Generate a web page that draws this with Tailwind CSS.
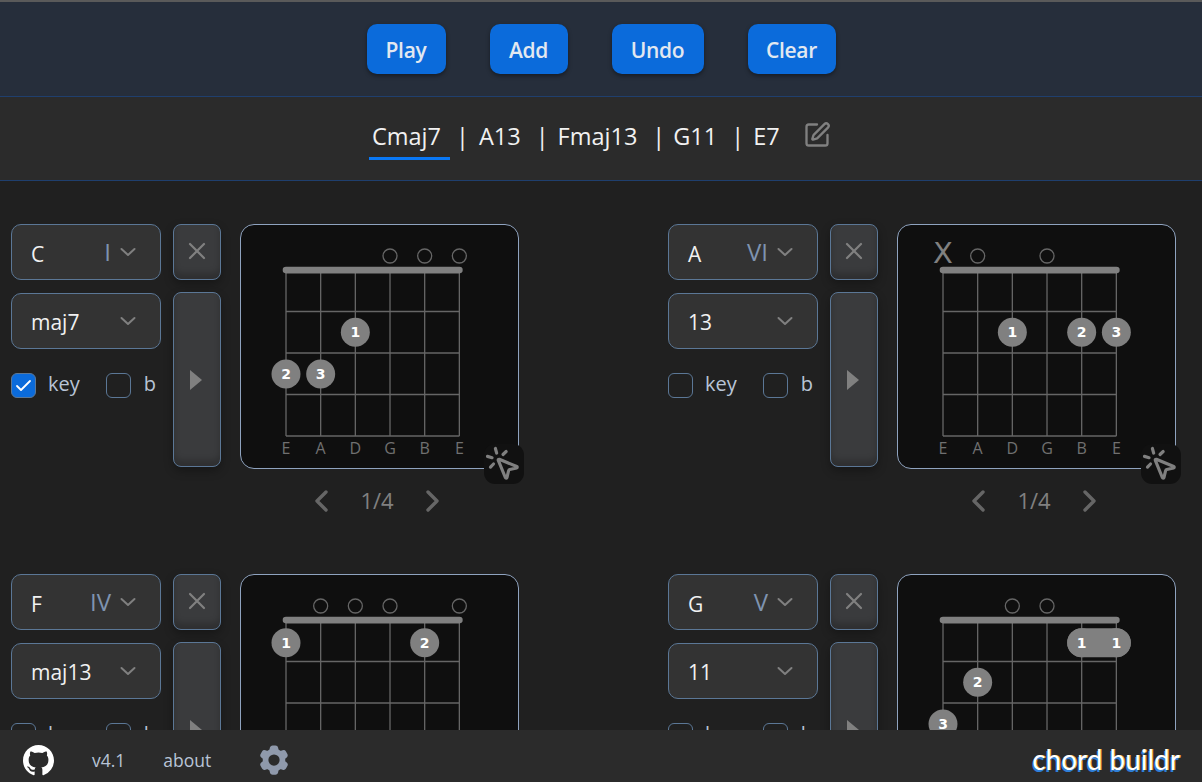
<!DOCTYPE html>
<html lang="en">
<head>
    <meta charset="UTF-8">
    <title>chord buildr</title>
    <script src="https://cdn.jsdelivr.net/npm/@tailwindcss/browser@4"></script>
</head>
<body class="h-screen overflow-hidden flex flex-col bg-[#202020] font-['Open_Sans',sans-serif]">
    <header class="h-[97px] shrink-0 bg-[#262e3b] border-t-2 border-t-[#5a5a5a] border-b border-b-[#1f3f6e] flex justify-center gap-[44px] pt-[22px]">
        <button class="h-[50px] w-[79px] pt-[3px] rounded-[10px] bg-[#0b6bdb] text-[#e2e8f0] text-[21px] font-semibold tracking-[-0.3px] shadow-[0_2px_4px_rgba(0,0,0,0.4)]">Play</button>
        <button class="h-[50px] w-[78px] pt-[3px] rounded-[10px] bg-[#0b6bdb] text-[#e2e8f0] text-[21px] font-semibold tracking-[-0.3px] shadow-[0_2px_4px_rgba(0,0,0,0.4)]">Add</button>
        <button class="h-[50px] w-[92px] pt-[3px] rounded-[10px] bg-[#0b6bdb] text-[#e2e8f0] text-[21px] font-semibold tracking-[-0.3px] shadow-[0_2px_4px_rgba(0,0,0,0.4)]">Undo</button>
        <button class="h-[50px] w-[88px] pt-[3px] rounded-[10px] bg-[#0b6bdb] text-[#e2e8f0] text-[21px] font-semibold tracking-[-0.3px] shadow-[0_2px_4px_rgba(0,0,0,0.4)]">Clear</button>
    </header>

    <nav class="h-[84px] shrink-0 bg-[#2b2b2b] border-b border-b-[#1f3f6e] flex items-start pl-[369px] pt-[21px] text-[23.5px] leading-[36px] text-[#f1f1f1]">
        <span class="w-[81px] h-[42px] pl-[3px] border-b-[3px] border-b-[#0a78f5]">Cmaj7</span>
        <span class="ml-[6px] mr-[10px]">|</span><span>A13</span>
        <span class="ml-[15px] mr-[9px]">|</span><span>Fmaj13</span>
        <span class="ml-[15px] mr-[8px]">|</span><span>G11</span>
        <span class="ml-[14px] mr-[9px]">|</span><span>E7</span>
        <svg class="ml-[23px] mt-[3px] w-[28px] h-[28px]" viewBox="0 0 24 24" fill="none" stroke="#808080" stroke-width="2" stroke-linecap="round" stroke-linejoin="round">
            <path d="M12 3H5a2 2 0 0 0-2 2v14a2 2 0 0 0 2 2h14a2 2 0 0 0 2-2v-7"/>
            <path d="M18.375 2.625a1 1 0 0 1 3 3l-9.013 9.014a2 2 0 0 1-.853.505l-2.873.84a.5.5 0 0 1-.62-.62l.84-2.873a2 2 0 0 1 .506-.852z"/>
        </svg>
    </nav>

    <main id="cards" class="flex-1 min-h-0 overflow-hidden pt-[43px] pl-[11px] grid grid-cols-[657px_1fr] auto-rows-[350px]"></main>

    <footer class="h-[52px] shrink-0 bg-[#2b2b2b] flex items-center pl-[23px] pr-[22px] pt-[9px] text-[17.5px] text-[#b8c4d6]">
        <svg class="w-[31px] h-[31px]" viewBox="0 0 16 16" fill="#ffffff">
            <path d="M8 0C3.58 0 0 3.58 0 8c0 3.54 2.29 6.53 5.47 7.59.4.07.55-.17.55-.38 0-.19-.01-.82-.01-1.49-2.01.37-2.53-.49-2.69-.94-.09-.23-.48-.94-.82-1.13-.28-.15-.68-.52-.01-.53.63-.01 1.08.58 1.23.82.72 1.21 1.87.87 2.33.66.07-.52.28-.87.51-1.07-1.78-.2-3.64-.89-3.64-3.95 0-.87.31-1.59.82-2.15-.08-.2-.36-1.02.08-2.12 0 0 .67-.21 2.2.82.64-.18 1.32-.27 2-.27.68 0 1.36.09 2 .27 1.53-1.04 2.2-.82 2.2-.82.44 1.1.16 1.92.08 2.12.51.56.82 1.27.82 2.15 0 3.07-1.87 3.75-3.65 3.95.29.25.54.73.54 1.48 0 1.07-.01 1.93-.01 2.2 0 .21.15.46.55.38A8.013 8.013 0 0016 8c0-4.42-3.58-8-8-8z"/>
        </svg>
        <span class="ml-[38px]">v4.1</span>
        <span class="ml-[38px]">about</span>
        <svg class="ml-[45px] -mt-[1px] w-[36px] h-[36px]" viewBox="0 0 24 24" fill="#8f99ab">
            <path fill-rule="evenodd" clip-rule="evenodd" d="M11.078 2.25c-.917 0-1.699.663-1.85 1.567L9.05 4.889c-.02.12-.115.26-.297.348a7.493 7.493 0 0 0-.986.57c-.166.115-.334.126-.45.083L6.3 5.508a1.875 1.875 0 0 0-2.282.819l-.922 1.597a1.875 1.875 0 0 0 .432 2.385l.84.692c.095.078.17.229.154.43a7.598 7.598 0 0 0 0 1.139c.015.2-.059.352-.153.43l-.841.692a1.875 1.875 0 0 0-.432 2.385l.922 1.597a1.875 1.875 0 0 0 2.282.818l1.019-.382c.115-.043.283-.031.45.082.312.214.641.405.985.57.182.088.277.228.297.35l.178 1.071c.151.904.933 1.567 1.85 1.567h1.844c.916 0 1.699-.663 1.85-1.567l.178-1.072c.02-.12.114-.26.297-.349.344-.165.673-.356.985-.57.167-.114.335-.125.45-.082l1.02.382a1.875 1.875 0 0 0 2.28-.819l.923-1.597a1.875 1.875 0 0 0-.432-2.385l-.84-.692c-.095-.078-.17-.229-.154-.43a7.614 7.614 0 0 0 0-1.139c-.016-.2.059-.352.153-.43l.84-.692c.708-.582.891-1.59.433-2.385l-.922-1.597a1.875 1.875 0 0 0-2.282-.818l-1.02.382c-.114.043-.282.031-.449-.083a7.49 7.49 0 0 0-.985-.57c-.183-.087-.277-.227-.297-.348l-.179-1.072a1.875 1.875 0 0 0-1.85-1.567h-1.843ZM12 15.75a3.75 3.75 0 1 0 0-7.5 3.75 3.75 0 0 0 0 7.5Z"/>
        </svg>
        <span class="ml-auto -mt-[3px] font-['Lato',sans-serif] text-[28px] text-white [text-shadow:-1px_2px_0_#2f7fd8,1px_0_0_#e0a030]">chord buildr</span>
    </footer>

    <script>
        const fretY = [0, 67.7, 107.3, 149, 190];
        const stringX = i => 45 + i * 34.67;
        const names = ['E', 'A', 'D', 'G', 'B', 'E'];

        const chevron = '<svg class="w-[18px] h-[18px]" viewBox="0 0 18 18" fill="none" stroke="#808080" stroke-width="2" stroke-linecap="round" stroke-linejoin="round"><path d="M2.5 6 9 12l6.5-6"/></svg>';

        const chords = [
            { root: 'C', roman: 'I', type: 'maj7', key: true, muted: [], open: [3, 4, 5], dots: [[2, 2, 1], [0, 3, 2], [1, 3, 3]] },
            { root: 'A', roman: 'VI', type: '13', key: false, muted: [0], open: [1, 3], dots: [[2, 2, 1], [4, 2, 2], [5, 2, 3]] },
            { root: 'F', roman: 'IV', type: 'maj13', key: false, muted: [], open: [1, 2, 3, 5], dots: [[0, 1, 1], [4, 1, 2]] },
            { root: 'G', roman: 'V', type: '11', key: false, muted: [], open: [2, 3], barre: [4, 5, 1], dots: [[4, 1, 1], [5, 1, 1], [1, 2, 2], [0, 3, 3]] },
        ];

        function diagram(c) {
            let svg = '';
            names.forEach((n, i) => {
                svg += `<line x1="${stringX(i)}" y1="45" x2="${stringX(i)}" y2="211" stroke="#666" stroke-width="1.3"/>`;
                svg += `<text x="${stringX(i)}" y="228.5" text-anchor="middle" font-size="16" fill="#707070">${n}</text>`;
            });
            [86.5, 128, 169.5, 211].forEach(y => {
                svg += `<line x1="45" y1="${y}" x2="218.4" y2="${y}" stroke="#666" stroke-width="1.3"/>`;
            });
            svg += '<rect x="41.7" y="41.7" width="180" height="6.7" rx="3.3" fill="#808080"/>';
            c.open.forEach(i => {
                svg += `<circle cx="${stringX(i)}" cy="31" r="7" fill="none" stroke="#666" stroke-width="1.3"/>`;
            });
            c.muted.forEach(i => {
                svg += `<text x="${stringX(i)}" y="38" text-anchor="middle" font-family="DejaVu Sans" font-size="29" fill="#808080">X</text>`;
            });
            if (c.barre) {
                const [a, b, f] = c.barre;
                svg += `<rect x="${stringX(a) - 14.5}" y="${fretY[f] - 14.5}" width="${stringX(b) - stringX(a) + 29}" height="29" rx="14.5" fill="#808080"/>`;
            }
            c.dots.forEach(([s, f, n]) => {
                svg += `<circle cx="${stringX(s)}" cy="${fretY[f]}" r="14.5" fill="#808080"/>`;
                svg += `<text x="${stringX(s)}" y="${fretY[f] + 5}" text-anchor="middle" font-family="DejaVu Sans" font-weight="bold" font-size="14" fill="#fff">${n}</text>`;
            });
            return svg;
        }

        function card(c) {
            const check = c.key
                ? '<span class="w-[25px] h-[25px] rounded-[6px] bg-[#0b6bdb] border border-[#5b7796] flex items-center justify-center"><svg class="w-[17px] h-[17px]" viewBox="0 0 17 17" fill="none" stroke="#fff" stroke-width="1.8" stroke-linecap="round" stroke-linejoin="round"><path d="M2 9l4 4 9-9"/></svg></span>'
                : '<span class="w-[25px] h-[25px] rounded-[6px] border border-[#5b7796]"></span>';
            return `
            <div class="flex items-start">
                <div class="w-[150px] flex flex-col">
                    <div class="h-[56px] rounded-[10px] border border-[#5b7796] bg-[#333333] flex items-center pl-[19px] pr-[23px] text-[21px] text-[#f1f1f1]">
                        <span class="pt-[5px]">${c.root}</span>
                        <span class="ml-auto mr-[8px] text-[#7f93b0] text-[24px]">${c.roman}</span>
                        ${chevron}
                    </div>
                    <div class="mt-[13px] h-[56px] rounded-[10px] border border-[#5b7796] bg-[#333333] flex items-center justify-between pl-[19px] pr-[23px] text-[21px] text-[#f1f1f1]">
                        <span class="pt-[3px]">${c.type}</span>
                        ${chevron}
                    </div>
                    <div class="mt-[20px] flex items-center text-[20px] text-[#b8c4d6]">
                        ${check}
                        <span class="ml-[12px] pb-[3px]">key</span>
                        <span class="ml-auto w-[25px] h-[25px] rounded-[6px] border border-[#5b7796]"></span>
                        <span class="ml-[13px] mr-[5px] pb-[3px]">b</span>
                    </div>
                </div>
                <div class="ml-[12px] w-[48px] flex flex-col gap-[12px]">
                    <button class="h-[56px] rounded-[8px] border border-[#5b7796] bg-[#3a3b3d] shadow-[inset_0_-6px_6px_rgba(0,0,0,0.2),0_4px_10px_rgba(0,0,0,0.3)] flex items-center justify-center pb-[2px]">
                        <svg class="w-[18px] h-[18px]" viewBox="0 0 18 18" stroke="#808080" stroke-width="2.2" stroke-linecap="round"><path d="M2 2l14 14M16 2 2 16"/></svg>
                    </button>
                    <button class="h-[175px] rounded-[8px] border border-[#5b7796] bg-[#3a3b3d] shadow-[inset_0_-6px_6px_rgba(0,0,0,0.2),0_4px_10px_rgba(0,0,0,0.3)] flex items-center justify-center">
                        <svg class="w-[12px] h-[20px] -ml-[3px]" viewBox="0 0 12 20" fill="#808080"><path d="M0 0l12 10L0 20z"/></svg>
                    </button>
                </div>
                <div class="ml-[19px] w-[279px] flex flex-col items-center">
                    <div class="relative w-[279px] h-[245px] rounded-[14px] border border-[#8fa3bf] bg-[#0f0f0f]">
                        <svg class="w-[277px] h-[243px] font-['Open_Sans',sans-serif]" viewBox="0 0 277 243">${diagram(c)}</svg>
                        <span class="absolute left-[243px] top-[219px] w-[40px] h-[40px] rounded-[11px] bg-[#111111] flex items-center justify-center">
                            <svg class="w-[38px] h-[38px] -ml-[2px] -mt-[1px]" viewBox="0 0 24 24" fill="none" stroke="#808080" stroke-width="2" stroke-linecap="round" stroke-linejoin="round">
                                <path d="M14 4.1 12 6"/><path d="m5.1 8-2.9-.8"/><path d="m6 12-1.9 2"/><path d="M7.2 2.2 8 5.1"/>
                                <path d="M9.037 9.69a.498.498 0 0 1 .653-.653l11 4.5a.5.5 0 0 1-.074.949l-4.349 1.041a1 1 0 0 0-.74.739l-1.04 4.35a.5.5 0 0 1-.95.074z"/>
                            </svg>
                        </span>
                    </div>
                    <div class="mt-[15px] -ml-[5px] flex items-center text-[22px] text-[#808080]">
                        <svg class="w-[16px] h-[22px]" viewBox="0 0 16 22" fill="none" stroke="#666" stroke-width="3.4" stroke-linecap="round" stroke-linejoin="round"><path d="M13 2 4 11l9 9"/></svg>
                        <span class="ml-[31px] mr-[31px]">1/4</span>
                        <svg class="w-[16px] h-[22px]" viewBox="0 0 16 22" fill="none" stroke="#666" stroke-width="3.4" stroke-linecap="round" stroke-linejoin="round"><path d="M3 2l9 9-9 9"/></svg>
                    </div>
                </div>
            </div>`;
        }

        document.getElementById('cards').innerHTML = chords.map(card).join('');
    </script>
</body>
</html>
